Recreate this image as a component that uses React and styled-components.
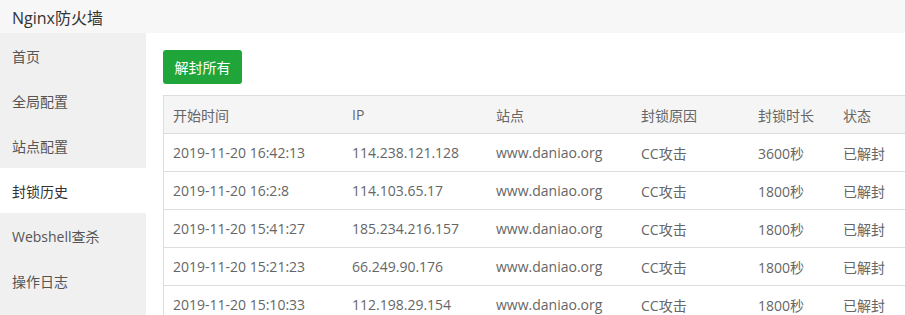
import React from "react";
import styled, { createGlobalStyle } from "styled-components";

const GlobalStyle = createGlobalStyle`
  html, body {
    margin: 0;
    padding: 0;
    background: #fff;
    font-family: "Open Sans", "Noto Sans CJK SC", sans-serif;
  }
`;

const Page = styled.div`
  width: 905px;
  height: 315px;
  overflow: hidden;
  display: flex;
  flex-direction: column;
`;

const TopBar = styled.div`
  height: 33px;
  flex-shrink: 0;
  background: #f7f7f7;
  display: flex;
  align-items: center;
  padding-left: 12px;
  font-size: 16px;
  color: #333;
`;

const Body = styled.div`
  flex: 1;
  display: flex;
  min-height: 0;
`;

const Sidebar = styled.div`
  width: 146px;
  flex-shrink: 0;
  background: #f0f0f0;
  display: flex;
  flex-direction: column;
`;

const NavItem = styled.div`
  height: 45px;
  flex-shrink: 0;
  display: flex;
  align-items: center;
  padding-left: 12px;
  font-size: 14px;
  color: ${(props) => (props.active ? "#333" : "#555")};
  background: ${(props) => (props.active ? "#fff" : "transparent")};
`;

const Main = styled.div`
  flex: 1;
  padding: 17px 0 0 17px;
  display: flex;
  flex-direction: column;
  align-items: flex-start;
`;

const Button = styled.button`
  height: 34px;
  width: 79px;
  flex-shrink: 0;
  border: none;
  border-radius: 3px;
  background: #20a53a;
  color: #fff;
  font-family: inherit;
  font-size: 14px;
  padding: 0;
  margin-bottom: 11px;
`;

const Table = styled.table`
  width: 742px;
  flex-shrink: 0;
  table-layout: fixed;
  border-collapse: collapse;
  border: 1px solid #ddd;
  font-size: 14px;
  color: #666;
`;

const Th = styled.th`
  text-align: left;
  font-weight: normal;
  background: #f5f5f5;
  height: 37px;
  padding: 0 0 0 9px;
  width: ${(props) => props.width - 9}px;
  border-bottom: 1px solid #ddd;
`;

const Td = styled.td`
  height: 37px;
  padding: 0 0 0 9px;
  border-bottom: 1px solid #ddd;
  white-space: nowrap;
`;

const columns = [
  { title: "开始时间", width: 179 },
  { title: "IP", width: 144 },
  { title: "站点", width: 145 },
  { title: "封锁原因", width: 117 },
  { title: "封锁时长", width: 85 },
  { title: "状态", width: 71 },
];

const rows = [
  ["2019-11-20 16:42:13", "114.238.121.128", "www.daniao.org", "CC攻击", "3600秒", "已解封"],
  ["2019-11-20 16:2:8", "114.103.65.17", "www.daniao.org", "CC攻击", "1800秒", "已解封"],
  ["2019-11-20 15:41:27", "185.234.216.157", "www.daniao.org", "CC攻击", "1800秒", "已解封"],
  ["2019-11-20 15:21:23", "66.249.90.176", "www.daniao.org", "CC攻击", "1800秒", "已解封"],
  ["2019-11-20 15:10:33", "112.198.29.154", "www.daniao.org", "CC攻击", "1800秒", "已解封"],
];

const menu = ["首页", "全局配置", "站点配置", "封锁历史", "Webshell查杀", "操作日志"];

export default function App() {
  return (
    <Page>
      <GlobalStyle />
      <TopBar>Nginx防火墙</TopBar>
      <Body>
        <Sidebar>
          {menu.map((m) => (
            <NavItem key={m} active={m === "封锁历史"}>
              {m}
            </NavItem>
          ))}
        </Sidebar>
        <Main>
          <Button>解封所有</Button>
          <Table>
            <thead>
              <tr>
                {columns.map((c) => (
                  <Th key={c.title} width={c.width}>
                    {c.title}
                  </Th>
                ))}
              </tr>
            </thead>
            <tbody>
              {rows.map((r, i) => (
                <tr key={i}>
                  {r.map((v, j) => (
                    <Td key={j}>{v}</Td>
                  ))}
                </tr>
              ))}
            </tbody>
          </Table>
        </Main>
      </Body>
    </Page>
  );
}
